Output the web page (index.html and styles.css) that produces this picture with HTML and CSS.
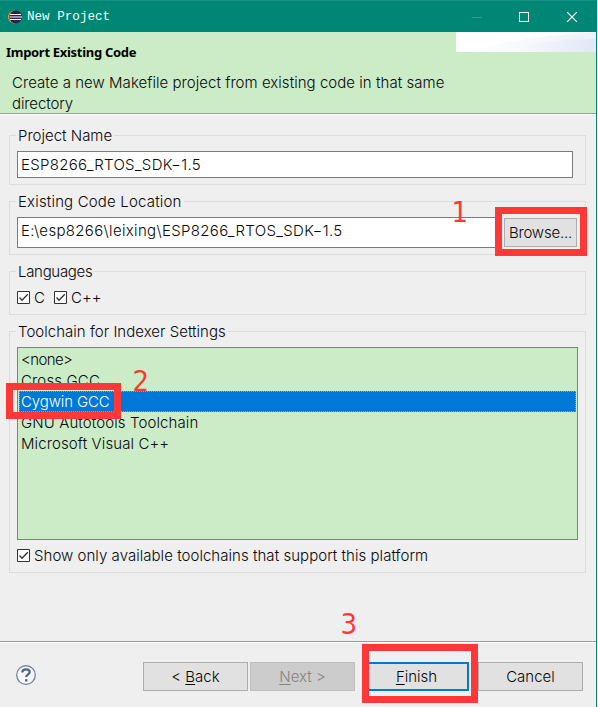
FILE: index.html
```
<!DOCTYPE html>
<html lang="en">
<head>
<meta charset="utf-8">
<title>New Project</title>
<link rel="stylesheet" href="styles.css">
</head>
<body>
<div class="window">
  <header class="titlebar">
    <svg class="logo" width="14" height="14" viewBox="0 0 14 14"><circle cx="6.5" cy="7" r="6.5" fill="#f39a27"/><circle cx="7.6" cy="7" r="6.4" fill="#2c2255"/><path d="M2 4.500h11M1.500 7h12.500M2 9.500h11" stroke="#fff" stroke-width="1.100"/></svg>
    <span class="title">New Project</span>
    <svg class="controls" width="110" height="14" viewBox="0 0 110 14" fill="none"><path d="M0 7.5h10" stroke="#389d8e"/><rect x="47.5" y="2.5" width="9" height="9" stroke="#fff"/><path d="M95.2 2.2l9.6 9.6M104.800 2.200l-9.600 9.600" stroke="#fff" stroke-width="1.2"/></svg>
  </header>
  <section class="banner">
    <div class="banner-text">
      <h1>Import Existing Code</h1>
      <p><span class="l-desc">Create a new Makefile project from existing code in that same</span><br><span class="l-dir">directory</span></p>
    </div>
    <svg class="wave" width="140" height="20" viewBox="0 0 140 20"><defs><linearGradient id="g"><stop offset="0" stop-color="#fff"/><stop offset="1" stop-color="#dfe5f6"/></linearGradient></defs><path fill="#fff" d="M0 0h140v20H0z"/><path d="M10 20Q60 5 140 0v20z" fill="url(#g)" opacity=".55"/><path d="M40 20Q85 6 140 7v13z" fill="url(#g)" opacity=".8"/></svg>
  </section>
  <main class="content">
    <fieldset class="name"><legend class="l-name">Project Name</legend>
      <div class="field"><span class="l-project">ESP8266_RTOS_SDK−1.5</span></div>
    </fieldset>
    <fieldset class="location"><legend class="l-location">Existing Code Location</legend>
      <div class="row"><div class="field path"><span class="l-path">E:\esp8266\leixing\ESP8266_RTOS_SDK−1.5</span></div><div class="button browse"><span>Browse...</span></div></div>
      <div class="mark frame1"></div><div class="mark-num num1">1</div>
    </fieldset>
    <fieldset class="languages"><legend class="l-lang">Languages</legend>
      <div class="checks">
        <svg class="check" viewBox="0 0 13 13"><path d="M.5.5h12v12H.5z"/><path class="tick" d="M2.500 6.500L5 9.200l5.800-6"/></svg><span class="lang-c">C</span>
        <svg class="check" viewBox="0 0 13 13"><path d="M.5.5h12v12H.5z"/><path class="tick" d="M2.500 6.500L5 9.200l5.800-6"/></svg><span class="lang-cpp">C++</span>
      </div>
    </fieldset>
    <fieldset class="toolchain"><legend class="l-tool">Toolchain for Indexer Settings</legend>
      <ul class="list">
        <li><span class="l-none">&lt;none&gt;</span></li>
        <li><span class="l-cross">Cross GCC</span></li>
        <li class="selected"><span class="l-cyg">Cygwin GCC</span></li>
        <li><span class="l-gnu">GNU Autotools Toolchain</span></li>
        <li><span class="l-ms">Microsoft Visual C++</span></li>
      </ul>
      <div class="checks only">
        <svg class="check" viewBox="0 0 13 13"><path d="M.5.5h12v12H.5z"/><path class="tick" d="M2.500 6.500L5 9.200l5.800-6"/></svg><span class="l-show">Show only available toolchains that support this platform</span>
      </div>
      <div class="mark frame2"></div><div class="mark-num num2">2</div>
    </fieldset>
  </main>
  <footer class="footer">
    <svg class="help" width="20" height="20" viewBox="0 0 20 20" fill="none"><circle cx="10" cy="10" r="9.300" fill="#f4f6f8" stroke="#6c7b98" stroke-width="1.200"/><path d="M6.300 7.600C6.300 5.200 7.800 4.300 10 4.300s3.700 1 3.700 2.800c0 2.300-3.500 2.300-3.500 5" stroke="#53648c" stroke-width="2.200"/><path d="M9 14.200h2.400v2.300H9z" fill="#53648c"/></svg>
    <div class="button back"><span>&lt; <u>B</u>ack</span></div>
    <div class="button next"><span><u>N</u>ext &gt;</span></div>
    <div class="button finish"><span><u>F</u>inish</span></div>
    <div class="button cancel"><span>Cancel</span></div>
    <div class="mark frame3"></div><div class="mark-num num3">3</div>
  </footer>
</div>
</body>
</html>
```
FILE: styles.css
```
* { box-sizing: border-box; }
body { margin: 0; background: #fff; overflow: hidden; color: #080808; font: 350 15px/21px Inter, "Liberation Sans", sans-serif; font-feature-settings: "calt" 0; }
.window { width: 597px; height: 707px; border-right: 1px solid #008674; background: #efefef; display: flex; flex-direction: column; }
.titlebar { height: 32px; background: #008674; border-top: 1px solid #168d7d; display: flex; align-items: center; padding: 0 14px 0 8px; }
.title { color: #eefffc; font: 12.6px/20px "Liberation Mono", monospace; margin-left: 5px; }
.controls { margin-left: auto; }
.banner { height: 83px; background: #ccecc8; border-bottom: 1px solid #fff; box-shadow: inset 0 -1px #97a196; display: flex; justify-content: space-between; }
.banner-text { padding: 10px 0 0 6px; }
h1 { margin: 0; font: bold 13px/20px "Noto Sans", sans-serif; letter-spacing: -.3px; color: #000; white-space: nowrap; }
p { margin: 10px 0 0 6px; white-space: nowrap; }
.l-dir { letter-spacing: -.1px; }
.l-desc { letter-spacing: .04px; }
.l-lang { letter-spacing: -.3px; }
.l-project { letter-spacing: .3px; }
.l-path { letter-spacing: .33px; }
.l-none { letter-spacing: -.6px; }
.l-cross { letter-spacing: .15px; }
.l-cyg { letter-spacing: -.12px; }
.l-gnu, .l-ms { letter-spacing: .1px; }
.l-location { letter-spacing: .17px; }
.l-tool { letter-spacing: .03px; }
.l-show { letter-spacing: .04px; }
.wave { flex: none; margin-left: -20px; }
.content { flex: 1; padding: 10px 10px 0 9px; display: flex; flex-direction: column; gap: 6px; }
fieldset { margin: 0; min-width: 0; border: 1px solid #dcdcdc; padding: 5px 7px 0; position: relative; width: 577px; white-space: nowrap; }
legend { padding: 0 2px; margin-left: -1px; height: 21px; }
.name { height: 60px; }
.location { height: 64px; }
.languages { height: 54px; }
.toolchain { height: 252px; }
.field { width: 556px; height: 27px; border: 1px solid #7a7a7a; background: #fff; padding: 2px 3px; }
.row { display: flex; gap: 3px; }
.path { width: 484px; height: 31px; padding-top: 2px; }
.button { border: 1px solid #adadad; background: #e1e1e1; display: flex; justify-content: center; align-items: center; height: 29px; width: 105px; white-space: pre; }
.button.browse { width: 73px; margin-top: 1px; letter-spacing: -.2px; }
.checks { display: flex; align-items: center; height: 21px; }
.check { width: 13px; height: 13px; fill: #fff; stroke: #333; margin-right: 4px; }
.check .tick { fill: none; stroke-width: 1.3; }
.lang-c { width: 20px; }
.list { list-style: none; margin: 0; padding: 1px; width: 561px; height: 193px; border: 1px solid #7b857a; background: #ccecc8; }
.list li { height: 21px; line-height: 21px; padding-left: 2px; }
.list .selected { background: #0078d7; color: #fff; outline: 1px dotted #c99b3d; outline-offset: -1px; }
.only { margin-top: 5px; }
.footer { height: 66px; border-top: 1px solid #9c9c9c; box-shadow: inset 0 1px #fff; position: relative; display: flex; padding: 20px 0 0 16px; }
.help { margin: 3px 107px 0 0; }
.next { margin-left: 2px; background: #ccc; border-color: #bfbfbf; color: #838383; }
.finish { margin-left: 9px; border: 2px solid #0078d7; }
.cancel { margin-left: 9px; }
u { text-underline-offset: 2px; text-decoration-thickness: 1px; }
.mark { position: absolute; border: 7px solid #fc3838; }
.mark-num { position: absolute; color: #fc3838; font: 28px/30px "DejaVu Sans", sans-serif; transform: scaleX(.93); }
.frame1 { left: 485px; top: 5px; width: 92px; height: 49px; }
.num1 { left: 441px; top: -4px; }
.frame2 { left: -4px; top: 51px; width: 115px; height: 36px; }
.num2 { left: 122px; top: 35px; }
.location .mark, .location .mark-num, .toolchain .mark, .toolchain .mark-num { margin-top: -10px; }
.frame3 { left: 362px; top: 2px; width: 116px; height: 59px; }
.num3 { left: 340px; top: -32px; }
```
